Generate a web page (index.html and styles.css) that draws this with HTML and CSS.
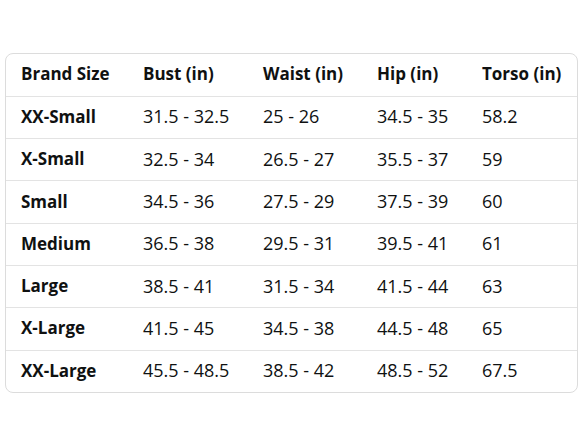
FILE: index.html
```html
<!DOCTYPE html>
<html>
<head>
<meta charset="utf-8">
<link rel="stylesheet" href="styles.css">
</head>
<body>
<div class="page">
  <div class="card">
    <table class="sizes">
      <colgroup>
        <col class="c1"><col class="c2"><col class="c3"><col class="c4"><col class="c5">
      </colgroup>
      <thead>
        <tr><th>Brand Size</th><th>Bust (in)</th><th>Waist (in)</th><th>Hip (in)</th><th>Torso (in)</th></tr>
      </thead>
      <tbody>
        <tr><th>XX-Small</th><td>31.5 - 32.5</td><td>25 - 26</td><td>34.5 - 35</td><td>58.2</td></tr>
        <tr><th>X-Small</th><td>32.5 - 34</td><td>26.5 - 27</td><td>35.5 - 37</td><td>59</td></tr>
        <tr><th>Small</th><td>34.5 - 36</td><td>27.5 - 29</td><td>37.5 - 39</td><td>60</td></tr>
        <tr><th>Medium</th><td>36.5 - 38</td><td>29.5 - 31</td><td>39.5 - 41</td><td>61</td></tr>
        <tr><th>Large</th><td>38.5 - 41</td><td>31.5 - 34</td><td>41.5 - 44</td><td>63</td></tr>
        <tr><th>X-Large</th><td>41.5 - 45</td><td>34.5 - 38</td><td>44.5 - 48</td><td>65</td></tr>
        <tr><th>XX-Large</th><td>45.5 - 48.5</td><td>38.5 - 42</td><td>48.5 - 52</td><td>67.5</td></tr>
      </tbody>
    </table>
  </div>
</div>
</body>
</html>
```
FILE: styles.css
```css
html, body {
  margin: 0;
  padding: 0;
  background: #ffffff;
}
.page {
  padding: 53px 0 0 5px;
}
.card {
  width: 573px;
  border: 1px solid #dcdcdc;
  border-radius: 8px;
  overflow: hidden;
  box-sizing: border-box;
}
.sizes {
  border-collapse: collapse;
  table-layout: fixed;
  width: 100%;
  font-family: "Open Sans", "Noto Sans", sans-serif;
  font-size: 18px;
  color: #0f1111;
}
.c1 { width: 122px; }
.c2 { width: 120px; }
.c3 { width: 114px; }
.c4 { width: 105px; }
.c5 { width: auto; }
.sizes th, .sizes td {
  height: 42.3px;
  padding: 0 0 2px 15px;
  text-align: left;
  white-space: nowrap;
  box-sizing: border-box;
}
.sizes th {
  font-weight: 700;
  font-size: 17px;
}
.sizes td {
  font-weight: 400;
}
.sizes tbody tr th, .sizes tbody tr td {
  border-top: 1px solid #e3e3e3;
}
```
